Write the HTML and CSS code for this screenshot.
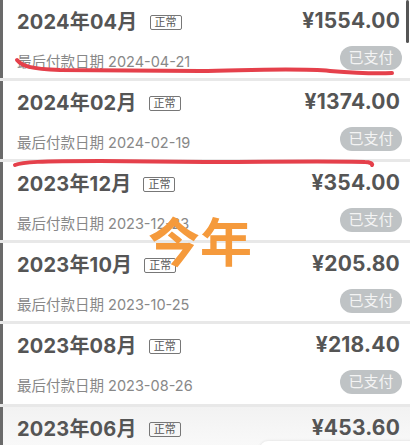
FILE: index.html
```html
<!DOCTYPE html>
<html lang="zh-CN">
<head>
<meta charset="utf-8">
<title>账单</title>
<link rel="stylesheet" href="styles.css">
</head>
<body>
<div class="page">
  <div class="list">
    <div class="row">
      <div class="top"><div class="title">2024年04月<span class="badge">正常</span></div><div class="amount">¥1554.00</div></div>
      <div class="bottom"><div class="date">最后付款日期 2024-04-21</div><div class="pill">已支付</div></div>
    </div>
    <div class="row">
      <div class="top"><div class="title">2024年02月<span class="badge">正常</span></div><div class="amount">¥1374.00</div></div>
      <div class="bottom"><div class="date">最后付款日期 2024-02-19</div><div class="pill">已支付</div></div>
    </div>
    <div class="row">
      <div class="top"><div class="title">2023年12月<span class="badge">正常</span></div><div class="amount">¥354.00</div></div>
      <div class="bottom"><div class="date">最后付款日期 2023-12-23</div><div class="pill">已支付</div></div>
    </div>
    <div class="row">
      <div class="top"><div class="title">2023年10月<span class="badge">正常</span></div><div class="amount">¥205.80</div></div>
      <div class="bottom"><div class="date">最后付款日期 2023-10-25</div><div class="pill">已支付</div></div>
    </div>
    <div class="row row-tall">
      <div class="top"><div class="title">2023年08月<span class="badge">正常</span></div><div class="amount">¥218.40</div></div>
      <div class="bottom"><div class="date">最后付款日期 2023-08-26</div><div class="pill">已支付</div></div>
    </div>
    <div class="row row-last">
      <div class="top"><div class="title">2023年06月<span class="badge">正常</span></div><div class="amount">¥453.60</div></div>
    </div>
  </div>

  <div class="scrollbar"></div>
  <div class="sheet"></div>

  <svg class="marks" width="410" height="445" viewBox="0 0 410 445">
    <path d="M17 60 C 22 66, 30 69, 60 70 L 200 71 C 260 70, 300 68, 330 71 C 355 73, 375 74, 392 73" />
    <path d="M15 165 C 22 162, 40 161, 100 161 L 205 162 C 260 162, 330 161, 365 162 C 370 162, 373 164, 372 165" />
  </svg>
  <div class="note">今年</div>
</div>
</body>
</html>
```
FILE: styles.css
```css
* { box-sizing: border-box; }
html, body { margin: 0; padding: 0; background: #ffffff; }
body {
  font-family: Inter, "Noto Sans CJK SC", sans-serif;
  color: #555555;
  overflow: hidden;
}
.page {
  position: relative;
  width: 410px;
  height: 445px;
  overflow: hidden;
}
.list {
  display: flex;
  flex-direction: column;
  gap: 3px;
  background: #e8e8e8;
}
.row {
  height: 78px;
  background: #ffffff;
  border-left: 3px solid #6a6a6a;
  padding: 0 10px 0 14px;
  display: flex;
  flex-direction: column;
}
.row-tall {
  height: 80px;
}
.row-last {
  height: 45px;
  background: linear-gradient(#f2f2f2, #fafafa);
}
.top {
  height: 40px;
  display: flex;
  align-items: center;
  justify-content: space-between;
  flex-shrink: 0;
}
.title {
  font-size: 20px;
  font-weight: 700;
  color: #555555;
  display: flex;
  align-items: center;
  letter-spacing: 0.2px;
}
.badge {
  margin-left: 12px;
  margin-top: 4px;
  font-size: 11px;
  font-weight: 400;
  line-height: 11px;
  padding: 1px 4px;
  border: 1px solid #777777;
  border-radius: 2px;
  color: #555555;
  letter-spacing: 0;
}
.amount {
  font-size: 21px;
  font-weight: 700;
  color: #555555;
  letter-spacing: 0.2px;
}
.bottom {
  height: 38px;
  display: flex;
  align-items: center;
  justify-content: space-between;
}
.date {
  font-size: 14.5px;
  color: #888888;
  margin-top: 2px;
}
.pill {
  width: 62px;
  height: 24px;
  border-radius: 12px;
  background: #bfc3c5;
  color: #f4f4f4;
  font-size: 15px;
  line-height: 24px;
  text-align: center;
  margin-top: -2px;
  margin-right: -2px;
}
.scrollbar {
  position: absolute;
  top: 0;
  right: 1px;
  width: 3px;
  height: 43px;
  background: #555555;
  border-radius: 2px;
}
.sheet {
  position: absolute;
  left: 260px;
  top: 441px;
  width: 160px;
  height: 20px;
  background: #ffffff;
  border-radius: 8px 0 0 0;
  box-shadow: 0 0 3px rgba(0, 0, 0, 0.12);
}
.marks {
  position: absolute;
  left: 0;
  top: 0;
  pointer-events: none;
}
.marks path {
  fill: none;
  stroke: #e5404b;
  stroke-width: 4;
  stroke-linecap: round;
  stroke-linejoin: round;
}
.note {
  position: absolute;
  left: 148px;
  top: 214px;
  font-family: "Noto Sans CJK SC", sans-serif;
  font-size: 52px;
  font-weight: 700;
  line-height: 1;
  color: #f59a3c;
}
```
